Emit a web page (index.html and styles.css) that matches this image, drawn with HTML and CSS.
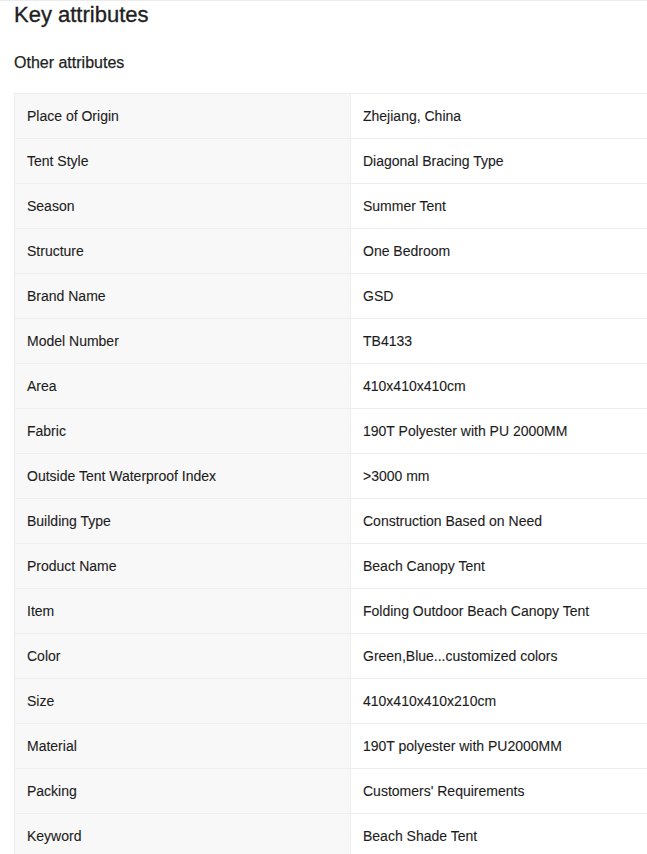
FILE: index.html
```html
<!DOCTYPE html>
<html lang="en">
<head>
<meta charset="utf-8">
<title>Key attributes</title>
<link rel="stylesheet" href="styles.css">
</head>
<body>
<div class="page">
  <h2 class="title">Key attributes</h2>
  <h3 class="subtitle">Other attributes</h3>
  <div class="table-wrap">
    <div class="attr-table">
      <div class="row"><div class="key">Place of Origin</div><div class="val">Zhejiang, China</div></div>
      <div class="row"><div class="key">Tent Style</div><div class="val">Diagonal Bracing Type</div></div>
      <div class="row"><div class="key">Season</div><div class="val">Summer Tent</div></div>
      <div class="row"><div class="key">Structure</div><div class="val">One Bedroom</div></div>
      <div class="row"><div class="key">Brand Name</div><div class="val">GSD</div></div>
      <div class="row"><div class="key">Model Number</div><div class="val">TB4133</div></div>
      <div class="row"><div class="key">Area</div><div class="val">410x410x410cm</div></div>
      <div class="row"><div class="key">Fabric</div><div class="val">190T Polyester with PU 2000MM</div></div>
      <div class="row"><div class="key">Outside Tent Waterproof Index</div><div class="val">&gt;3000 mm</div></div>
      <div class="row"><div class="key">Building Type</div><div class="val">Construction Based on Need</div></div>
      <div class="row"><div class="key">Product Name</div><div class="val">Beach Canopy Tent</div></div>
      <div class="row"><div class="key">Item</div><div class="val">Folding Outdoor Beach Canopy Tent</div></div>
      <div class="row"><div class="key">Color</div><div class="val">Green,Blue...customized colors</div></div>
      <div class="row"><div class="key">Size</div><div class="val">410x410x410x210cm</div></div>
      <div class="row"><div class="key">Material</div><div class="val">190T polyester with PU2000MM</div></div>
      <div class="row"><div class="key">Packing</div><div class="val">Customers' Requirements</div></div>
      <div class="row"><div class="key">Keyword</div><div class="val">Beach Shade Tent</div></div>
    </div>
  </div>
</div>
</body>
</html>
```
FILE: styles.css
```css
html, body {
  margin: 0;
  padding: 0;
  background: #fff;
}
body {
  font-family: "Liberation Sans", Arial, sans-serif;
  color: #222;
  overflow: hidden;
}
.page {
  border-top: 1px solid #ececec;
  padding: 1px 0 0 14px;
  overflow: hidden;
}
.title {
  margin: 0;
  font-size: 22px;
  font-weight: 400;
  line-height: 25px;
  color: #1f1f1f;
  -webkit-text-stroke: 0.35px #1f1f1f;
}
.subtitle {
  margin: 26px 0 0;
  font-size: 16px;
  font-weight: 400;
  line-height: 19px;
  color: #1f1f1f;
  -webkit-text-stroke: 0.25px #1f1f1f;
}
.table-wrap {
  margin-top: 21px;
}
.attr-table {
  width: 674px;
  border-top: 1px solid #eeeeee;
  border-left: 1px solid #eeeeee;
}
.row {
  display: grid;
  grid-template-columns: 336px 336px;
  border-bottom: 1px solid #eeeeee;
}
.key, .val {
  height: 44px;
  display: flex;
  align-items: center;
  padding: 0 12px;
  font-size: 14px;
  color: #1c1c1c;
  -webkit-text-stroke: 0.1px #1c1c1c;
}
.key {
  background: #f8f8f8;
  border-right: 1px solid #eeeeee;
}
.val {
  background: #fff;
}
```
